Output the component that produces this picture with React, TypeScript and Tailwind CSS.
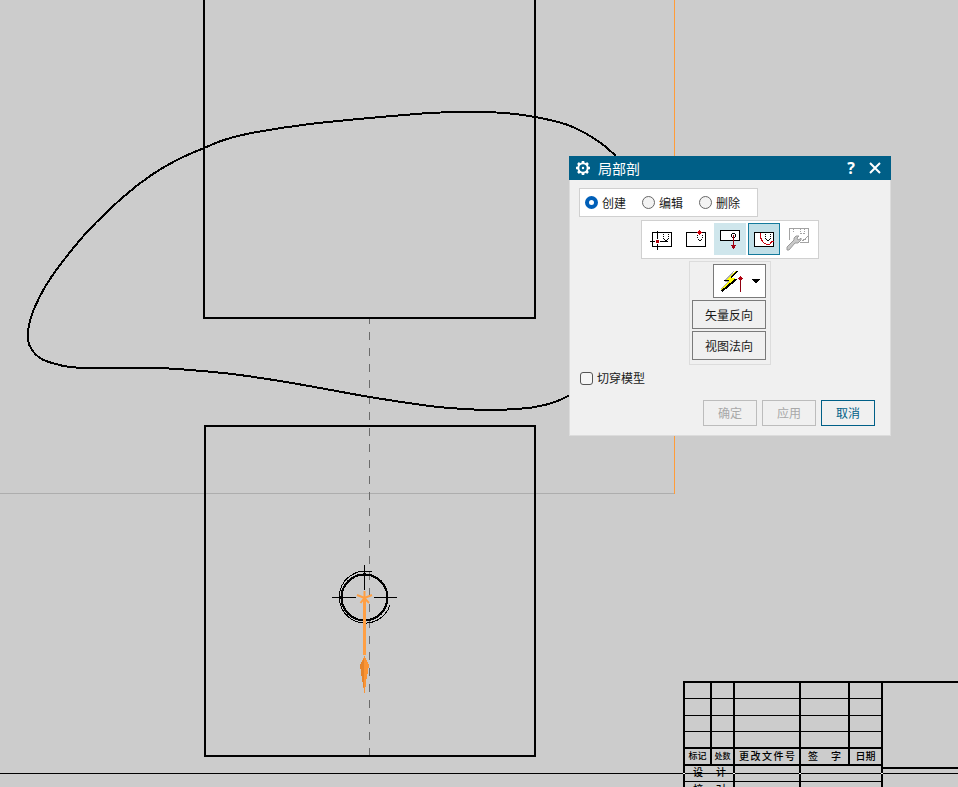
import { useState, type ReactNode } from "react";

const FONT = "font-['Noto_Sans_CJK_SC','Noto_Sans',sans-serif]";

type Point = [number, number];

const SECTION_POINTS: Point[] = [
  [616, 156], [602, 144], [585, 133], [565, 124], [535, 117], [505, 113], [470, 112], [430, 113],
  [370, 118], [310, 124], [257, 132], [227, 139], [204, 148], [177, 160], [150, 176], [122, 198],
  [88, 231], [60, 265], [45, 287], [34, 309], [29, 325], [28, 340], [32, 350], [40, 358],
  [52, 363], [70, 367], [93, 368], [155, 368], [190, 370], [232, 374], [280, 381], [320, 388],
  [370, 397], [430, 406], [465, 409], [492, 410], [515, 409], [535, 407], [555, 402], [570, 395],
];

/** Smooth path through every point (Catmull-Rom turned into cubic segments). */
function spline(points: Point[]) {
  let d = `M${points[0][0]} ${points[0][1]}`;
  for (let i = 0; i < points.length - 1; i++) {
    const a = points[Math.max(i - 1, 0)];
    const b = points[i];
    const c = points[i + 1];
    const e = points[Math.min(i + 2, points.length - 1)];
    d += ` C${b[0] + (c[0] - a[0]) / 6} ${b[1] + (c[1] - a[1]) / 6} ${c[0] - (e[0] - b[0]) / 6} ${
      c[1] - (e[1] - b[1]) / 6
    } ${c[0]} ${c[1]}`;
  }
  return d;
}

function Drawing() {
  return (
    <svg className="absolute inset-0 h-full w-full" fill="none" shapeRendering="crispEdges" aria-hidden="true">
      <path d="M0 493.5H674" stroke="#adadad" />
      <path d="M674.5 0V494" stroke="#ff9c38" />
      <path d="M369.5 319V755" stroke="#6b6b6b" strokeDasharray="8 8" strokeDashoffset="3" />
      <g stroke="#000" strokeWidth="2">
        <path d="M204 0V318H535V0" strokeLinejoin="round" />
        <rect x="205" y="426" width="330" height="330" strokeLinejoin="round" />
        <path d={spline(SECTION_POINTS)} />
        <circle cx="364.5" cy="597.5" r="23" strokeWidth="2.2" />
      </g>
      <g stroke="#000">
        <path d="M372 572A26 26 0 1 0 390 605" />
        <path d="M364.5 565V590M332 597.5H356M374 597.5H397" />
      </g>
      <path d="M364.5 597V655" stroke="#ff9f43" strokeWidth="3" />
      <g stroke="#ff9f43" shapeRendering="auto">
        <path d="M364.5 591V598M357 595L364.5 598L372 595M360.5 603L364.5 598L369 603" strokeWidth="2" />
      </g>
      <path d="M364.5 656L369 665L368 671L366 682L365 693L364 693L363 683L361 673L360 665Z" fill="#fb9434" />
      <path d="M364 658L364 690L361 673L360 665Z" fill="#e5842b" />
    </svg>
  );
}

const COLS = ["w-[27px]", "w-[23px]", "w-[66px]", "w-[49px]", "w-[33px]"];
const CELL = "border-l-2 border-black p-0 text-center align-top";

function TitleBlock() {
  return (
    <div className="absolute top-[681px] right-0 left-[683px] flex text-[10px] leading-[14px] font-medium text-black">
      <table className="w-[198px] shrink-0 table-fixed border-separate border-spacing-0">
        <colgroup>
          {COLS.map((w) => (
            <col key={w} className={w} />
          ))}
        </colgroup>
        <tbody>
          {["h-[17px] border-t-2", "h-[17px] border-t", "h-[16px] border-t", "h-[16px] border-t"].map((size, row) => (
            <tr key={row}>
              {COLS.map((w) => (
                <td key={w} className={`${CELL} ${size}`} />
              ))}
            </tr>
          ))}
          <tr>
            <th className={`${CELL} h-[17px] border-t-2 text-[9px] font-medium`}>标记</th>
            <th className={`${CELL} h-[17px] border-t-2 text-[8px] font-medium`}>处数</th>
            <th className={`${CELL} h-[17px] border-t-2 font-medium`}>
              <span className="flex justify-between px-1">
                {[..."更改文件号"].map((c) => (
                  <span key={c}>{c}</span>
                ))}
              </span>
            </th>
            <th className={`${CELL} h-[17px] border-t-2 font-medium`}>
              <span className="flex justify-between px-[7px]">
                <span>签</span>
                <span>字</span>
              </span>
            </th>
            <th className={`${CELL} h-[17px] border-t-2 font-medium`}>日期</th>
          </tr>
          {["设计", "校对"].map((label, i) => (
            <tr key={label}>
              <th
                colSpan={2}
                className={`${CELL} h-[17px] font-medium ${i === 0 ? "border-t-2 leading-3" : "border-t"}`}
              >
                <span className="flex justify-between pr-[7px] pl-2">
                  <span>{label[0]}</span>
                  <span>{label[1]}</span>
                </span>
              </th>
              <td className={`${CELL} ${i === 0 ? "border-t-2" : "border-t"}`} />
              <td colSpan={2} className={`${CELL} ${i === 0 ? "border-t-2" : "border-t"}`} />
            </tr>
          ))}
        </tbody>
      </table>
      <div className="flex-1 border-l-2 border-black">
        <div className="h-[88px] border-y-2 border-black" />
      </div>
    </div>
  );
}

/** The sheet's frame line, drawn over the title block, light where it crosses thick rules. */
function FrameLine() {
  return (
    <svg className="absolute inset-0 h-full w-full" shapeRendering="crispEdges" aria-hidden="true">
      <rect x="0" y="773" width="100%" height="1" fill="#000" />
      {[683, 733, 799, 881].map((x) => (
        <rect key={x} x={x} y="773" width="2" height="1" fill="#fff" />
      ))}
    </svg>
  );
}

function Icon({ children, width = 24 }: { children: ReactNode; width?: number }) {
  return (
    <svg
      className="shrink-0"
      width={width}
      height="24"
      viewBox={`0 0 ${width} 24`}
      fill="none"
      stroke="#000"
      shapeRendering="crispEdges"
      aria-hidden="true"
    >
      {children}
    </svg>
  );
}

const TOOLS: { label: string; icon: ReactNode }[] = [
  {
    label: "选择视图",
    icon: (
      <Icon>
        <rect x="2.5" y="5.5" width="19" height="14" />
        <path d="M5 14.5H11" stroke="#fff" strokeWidth="3" />
        <path d="M7.5 4V12M7.5 17V23M0 14.5H5M10 14.5H18" />
        <path d="M13.5 7V12M18.5 7V12" strokeDasharray="1 1" />
        <path d="M14 12.5H15M17 12.5H18M15 13.5H17" />
        <rect x="6" y="13" width="3" height="3" fill="#b3000c" stroke="none" />
      </Icon>
    ),
  },
  {
    label: "指出基点",
    icon: (
      <Icon>
        <rect x="2.5" y="5.5" width="19" height="14" />
        <path d="M13.5 8V12M18.5 8V12" strokeDasharray="1 1" />
        <path d="M14 12.5H15M17 12.5H18M15 13.5H17" />
        <path d="M15.5 3V8M13 5.5H18M14 4.5H17M14 6.5H17" stroke="#d0000c" />
      </Icon>
    ),
  },
  {
    label: "指出拉伸矢量",
    icon: (
      <Icon>
        <rect x="2.5" y="3.5" width="19" height="10" fill="#fff" />
        <path d="M14 6.5H17M14 10.5H17M13.5 7V10M17.5 7V10" />
        <path d="M15.5 8V22" stroke="#a00010" />
        <path d="M13 18.5H18M14 19.5H17M14 20.5H17" stroke="#a00010" />
      </Icon>
    ),
  },
  {
    label: "选择曲线",
    icon: (
      <Icon>
        <rect x="2.5" y="5.5" width="19" height="14" fill="#fff" />
        <path d="M8.5 6V10L9.5 13L11.5 15.5L14.5 17.5H17.5L19.5 15L22 14" stroke="#c8000c" />
        <path d="M13.5 7V12M18.5 7V12" strokeDasharray="1 1" />
        <path d="M14 12.5H15M17 12.5H18M15 13.5H17" />
      </Icon>
    ),
  },
  {
    label: "修改边界曲线",
    icon: (
      <Icon>
        <g stroke="#a3a3a3">
          <path d="M3.5 13V1.5H22.5V15.5H14" />
          <path d="M7.5 2V6M14.5 2V7M18.5 2V7" strokeDasharray="1 1" />
          <path d="M15 6.5H16M17 6.5H18M16 13.5L19 12.5L22 9" />
        </g>
        <path
          d="M1 20L8 13L8 11L10 9L13 9L11 11L12 13L14 12L15 11L15 13L12 16L9 16L3 23L1 23Z"
          fill="#c8c8c8"
          stroke="#9a9a9a"
          shapeRendering="auto"
        />
      </Icon>
    ),
  },
];

const TOOL_STATE = [
  "border-transparent",
  "border-transparent",
  "border-[#cfe6ec] bg-[#cfe6ec]",
  "border-[#147a9c] bg-[#c1dfe7]",
  "border-transparent",
];

function SectionDialog() {
  const [mode, setMode] = useState("创建");
  return (
    <section
      role="dialog"
      aria-labelledby="dialog-title"
      className="absolute top-[156px] left-[569px] w-[322px] bg-[#f0f0f0] text-xs text-[#1a1a1a]"
    >
      <header className="flex h-6 items-center bg-[#005f87] px-1.5 text-white">
        <svg className="h-4 w-4" viewBox="0 0 16 16" fill="none" stroke="#fff" aria-hidden="true">
          <circle cx="8" cy="8" r="4.7" strokeWidth="2" />
          <circle cx="8" cy="8" r="1.2" fill="#fff" stroke="none" />
          <path
            d="M8 1V3M8 13V15M1 8H3M13 8H15M3 3L4.5 4.5M11.5 11.5L13 13M13 3L11.5 4.5M4.5 11.5L3 13"
            strokeWidth="2.6"
          />
        </svg>
        <h1 id="dialog-title" className="ml-[7px] flex-1 text-sm leading-6 font-normal">
          局部剖
        </h1>
        <button type="button" aria-label="帮助" className="w-5 text-base leading-6 font-bold font-['Open_Sans',sans-serif]">
          ?
        </button>
        <button type="button" aria-label="关闭" className="ml-1 flex w-5 justify-center">
          <svg className="h-3 w-3" viewBox="0 0 12 12" stroke="#fff" strokeWidth="2" aria-hidden="true">
            <path d="M1 1L11 11M11 1L1 11" />
          </svg>
        </button>
      </header>

      <div className="flex flex-col border-x border-b border-[#dcdcdc] px-[9px] pt-2 pb-[9px]">
        <div
          role="radiogroup"
          aria-labelledby="dialog-title"
          className="flex h-[29px] w-[179px] items-center gap-4 border border-[#d0d0d0] bg-white px-[5px]"
        >
          {["创建", "编辑", "删除"].map((name) => (
            <label key={name} className="flex items-center gap-1 leading-4">
              <input
                type="radio"
                name="mode"
                checked={mode === name}
                onChange={() => setMode(name)}
                className="h-[13px] w-[13px] appearance-none rounded-full border border-[#666] bg-[#f3f3f3] checked:border-4 checked:border-[#005fb8] checked:bg-white"
              />
              {name}
            </label>
          ))}
        </div>

        <div
          role="toolbar"
          aria-label="步骤"
          className="mt-[3px] ml-[62px] flex h-[39px] w-[178px] items-start gap-0.5 border border-[#d0d0d0] bg-white px-1 pt-0.5"
        >
          {TOOLS.map((tool, i) => (
            <button
              key={tool.label}
              type="button"
              aria-label={tool.label}
              disabled={i === 4}
              className={`flex h-8 w-8 items-center justify-center border ${TOOL_STATE[i]}`}
            >
              {tool.icon}
            </button>
          ))}
        </div>

        <div className="mt-0.5 ml-[110px] flex h-[104px] w-[82px] flex-col gap-[2px] border border-[#dcdcdc] py-[2px] pr-1 pl-[2px]">
          <button
            type="button"
            aria-label="矢量"
            aria-haspopup="menu"
            className="flex h-[34px] w-[53px] items-center self-end border border-[#7a7a7a] bg-white pl-1"
          >
            <Icon width={44}>
              <path d="M16 2L5 12L9 13L3 20L7 18L17 9H12Z" fill="#b0b0b0" stroke="none" />
              <path d="M9.5 1.5L10 2M10 2L4 10M11 12L3 20" stroke="none" />
              <path d="M17 2L19 2L13 9L18 9L4 22L3 20L12 12L7 12Z" fill="#ff0" stroke="none" />
              <path d="M19.5 2L13 8.5M18.5 9.5L3 22M6 11.5H11" />
              <path d="M18.5 10L4 22" strokeWidth="2" />
              <path d="M22.5 7V23" stroke="#900010" />
              <path d="M22 7.5H23M21 8.5H24M20 9.5H25M21 10.5H24" stroke="#b00010" />
              <path d="M34 10H42L39 14H37Z" fill="#000" stroke="none" />
            </Icon>
          </button>
          <button type="button" className="h-[29px] border border-[#7a7a7a] leading-[27px]">
            矢量反向
          </button>
          <button type="button" className="h-[29px] border border-[#7a7a7a] leading-[27px]">
            视图法向
          </button>
        </div>

        <label className="mt-[3px] ml-px flex h-5 items-center gap-1 self-start">
          <input
            type="checkbox"
            className="h-[13px] w-[13px] appearance-none rounded-[3px] border border-[#555] bg-[#f5f5f5]"
          />
          切穿模型
        </label>

        <footer className="mt-3 mr-[6px] flex justify-end gap-[5px]">
          <button type="button" disabled className="h-[26px] w-[54px] border border-[#bcbcbc] leading-6 text-[#a8a8a8]">
            确定
          </button>
          <button type="button" disabled className="h-[26px] w-[54px] border border-[#bcbcbc] leading-6 text-[#a8a8a8]">
            应用
          </button>
          <button type="button" className="h-[26px] w-[54px] border border-[#005f87] leading-6 text-[#005f87]">
            取消
          </button>
        </footer>
      </div>
    </section>
  );
}

export default function App() {
  return (
    <main className={`relative h-screen overflow-hidden bg-[#ccc] ${FONT}`}>
      <Drawing />
      <TitleBlock />
      <FrameLine />
      <SectionDialog />
    </main>
  );
}
